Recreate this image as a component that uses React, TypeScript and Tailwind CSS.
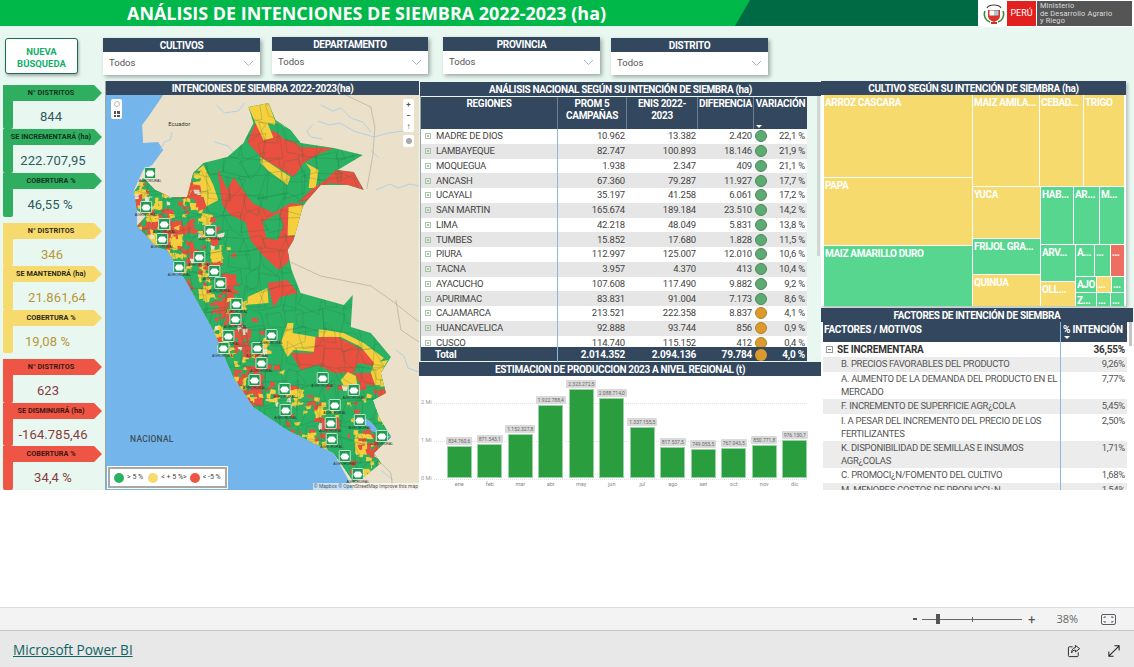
import React from "react";

type P = [number, number];
const pts = (a: P[]) => a.map((p) => p.join(",")).join(" ");

const G = "#2bb163";
const Y = "#f5cf3c";
const R = "#e9503f";

const coast: P[] = [
  [143, 178], [134, 192], [137, 210], [137, 226], [157, 247], [167, 250], [187, 283], [213, 330],
  [233, 377], [253, 407], [287, 430], [333, 453], [353, 480], [353, 490],
];
const peru: P[] = [
  [143, 178], [155, 190], [170, 197], [187, 197], [193, 173], [203, 163], [227, 157], [243, 143], [253, 123],
  [248, 107], [268, 103], [275, 120], [290, 130], [300, 143], [333, 148], [362, 155], [337, 170], [353, 172],
  [363, 190], [347, 185], [320, 185], [307, 200], [302, 207], [293, 240], [287, 250], [291, 270], [300, 293],
  [343, 305], [352, 295], [350, 327], [370, 333], [390, 357], [380, 373], [385, 393], [372, 400], [378, 417],
  [390, 437], [373, 453], [380, 463], [363, 477], [353, 482], [333, 453], [287, 430], [253, 407], [233, 377],
  [213, 330], [187, 283], [167, 250], [157, 247], [137, 226], [146, 216], [137, 210], [134, 192],
];
const big: [string, P[]][] = [
  [R, [[255, 123], [267, 130], [283, 133], [300, 147], [333, 148], [320, 153], [303, 163], [293, 177], [260, 157], [247, 142]]],
  [Y, [[248, 107], [268, 103], [275, 122], [287, 128], [267, 123], [273, 138], [263, 140], [255, 123]]],
  [G, [[275, 122], [290, 130], [300, 143], [285, 140], [273, 130]]],
  [Y, [[260, 157], [290, 177], [287, 185], [267, 170], [260, 163]]],
  [Y, [[305, 163], [318, 170], [315, 188], [308, 188], [310, 170]]],
  [R, [[335, 170], [353, 172], [363, 190], [347, 185], [328, 183], [307, 200], [297, 203], [310, 190], [325, 180]]],
  [R, [[217, 168], [227, 190], [233, 177], [252, 203], [273, 213], [290, 203], [305, 205], [297, 225], [290, 250], [288, 262], [278, 270], [262, 255], [250, 240], [245, 222], [230, 215], [222, 205]]],
  [G, [[262, 222], [278, 213], [283, 225], [277, 240], [266, 238]]],
  [Y, [[288, 207], [304, 205], [295, 235], [287, 236]]],
  [Y, [[203, 165], [213, 185], [218, 200], [205, 207], [203, 197], [187, 197], [192, 175]]],
  [R, [[187, 197], [203, 197], [207, 210], [195, 220], [187, 210]]],
  [G, [[240, 262], [256, 268], [258, 285], [247, 292], [240, 280]]],
  [Y, [[247, 297], [267, 288], [268, 303], [243, 305]]],
  [R, [[267, 283], [287, 280], [297, 293], [280, 297], [273, 307]]],
  [Y, [[287, 323], [293, 323], [292, 333], [315, 337], [315, 352], [293, 350], [287, 357], [280, 343]]],
  [R, [[315, 337], [337, 337], [357, 347], [373, 357], [377, 367], [357, 363], [353, 373], [333, 373], [317, 365], [300, 370], [290, 353], [313, 353]]],
  [Y, [[318, 329], [343, 333], [363, 343], [383, 358], [375, 365], [360, 347], [340, 337], [318, 337]]],
  [Y, [[373, 363], [387, 360], [380, 373], [385, 393], [373, 390], [370, 373]]],
  [R, [[353, 373], [370, 373], [377, 393], [365, 393]]],
  [Y, [[347, 372], [355, 376], [357, 388], [345, 390], [340, 380]]],
];
const markers: P[] = [
  [150, 173], [146, 207], [164, 224], [210, 231], [162, 239], [179, 267], [199, 257], [214, 271], [220, 283],
  [236, 304], [235, 319], [228, 336], [223, 348], [257, 348], [271, 335], [261, 363], [254, 380], [284, 389],
  [322, 378], [353, 390], [334, 405], [285, 410], [359, 420], [330, 423], [331, 439], [381, 436], [344, 456], [357, 474],
];

function segDist(p: P, a: P, b: P) {
  const dx = b[0] - a[0], dy = b[1] - a[1];
  const t = Math.max(0, Math.min(1, ((p[0] - a[0]) * dx + (p[1] - a[1]) * dy) / (dx * dx + dy * dy)));
  return Math.hypot(p[0] - a[0] - t * dx, p[1] - a[1] - t * dy);
}
function coastDist(p: P) {
  let d = 1e9;
  for (let i = 0; i < coast.length - 1; i++) d = Math.min(d, segDist(p, coast[i], coast[i + 1]));
  return d;
}
function buildCells() {
  let s = 12345;
  const rnd = () => {
    s = (s * 16807) % 2147483647;
    return s / 2147483647;
  };
  const pick = (y: number) => {
    const k = rnd();
    const g = y > 390 ? 0.66 : 0.5;
    return k < g ? G : k < g + (y > 390 ? 0.12 : 0.32) ? R : Y;
  };
  const blocks = new Map<string, string>();
  const fine: { p: string; c: string }[] = [];
  const step = 4;
  for (let y = 170; y < 490; y += step) {
    for (let x = 130; x < 395; x += step) {
      const south = y > 385 && x > 325;
      const d = coastDist([x, y]);
      if (d > 42 + (y < 260 ? 12 : 0) && !south) continue;
      const key = `${Math.floor(x / 13)}:${Math.floor(y / 13)}`;
      if (!blocks.has(key)) blocks.set(key, pick(y));
      const j = () => (rnd() - 0.5) * 3;
      const c = rnd() < 0.6 ? (blocks.get(key) as string) : rnd() < 0.06 ? "#ece2cc" : pick(y);
      const w = step + 0.5 + rnd() * 2;
      fine.push({
        p: pts([[x + j(), y + j()], [x + w + j(), y + j()], [x + w + j(), y + w + j()], [x + j(), y + w + j()]]),
        c,
      });
    }
  }
  const lines: string[] = [];
  const st = 19;
  for (let y = 100; y < 490; y += st) {
    for (let x = 130; x < 395; x += st) {
      const j = () => (rnd() - 0.5) * 12;
      lines.push(pts([[x + j(), y + j()], [x + st + j(), y + j()], [x + st + j(), y + st + j()], [x + j(), y + st + j()]]));
    }
  }
  return { fine, lines };
}
const cells = buildCells();

function PeruMap() {
  return (
    <svg viewBox="106 95 312 395" className="block h-full w-full" preserveAspectRatio="none">
      <defs>
        <clipPath id="peru-clip">
          <polygon points={pts(peru)} />
        </clipPath>
      </defs>
      <rect x="106" y="95" width="312" height="395" fill="#74b6ec" />
      <polygon
        points={pts([
          [163, 95], [148, 117], [142, 125], [143, 143], [158, 142], [163, 150], [152, 165], [143, 170], [134, 190],
          [137, 210], [137, 226], [157, 247], [167, 250], [187, 283], [213, 330], [233, 377], [253, 407], [287, 430],
          [333, 453], [353, 490], [418, 490], [418, 95],
        ])}
        fill="#ebe0c9"
      />
      <g fill="none" stroke="#a3cdec" strokeWidth="0.8">
        <path d="M320 105l12 6 8-3 10 10 12 4 8 10M317 121l12 4 10-2 14 8 20 6 15-4 22-3M312 125l-6 6 4 6 12 2" />
        <path d="M216 105l8 8 14-2 6-8M214 142l14 4 6 8M160 150l4-8 6-2 2-8M375 190l14-6 8 4 12-4 9 2M370 150l8 8" />
        <path d="M395 350l8 6 4 12 11 4M380 470l12 10" />
      </g>
      <g fill="none" stroke="#9d9a90" strokeWidth="0.5">
        <path d="M345 95l25 12 4 20-2 28-6 34M290 262l30 14 50 10 20 14 28 22M395 300l5 30 18 12M380 463l10 10 2 17" />
      </g>
      <polygon points={pts(peru)} fill={G} />
      <g clipPath="url(#peru-clip)">
        {big.map(([c, p], i) => (
          <polygon key={i} points={pts(p)} fill={c} />
        ))}
        {cells.fine.map((c, i) => (
          <polygon key={i} points={c.p} fill={c.c} />
        ))}
        {cells.lines.map((l, i) => (
          <polygon key={i} points={l} fill="none" stroke="#1f6f45" strokeOpacity="0.55" strokeWidth="0.4" />
        ))}
      </g>
      <path d="M360 417l8 3 6 6 5 8-8-3-7-6z" fill="#74b6ec" />
      <path d="M379 430l6 8 5-2" fill="none" stroke="#74b6ec" strokeWidth="1.5" />
      {markers.map(([x, y], i) => (
        <g key={i}>
          <rect x={x - 5.5} y={y - 5.5} width="11" height="11" rx="0.8" fill="#1e9a52" stroke="#fff" strokeWidth="0.7" />
          <path d={`M${x - 4.5} ${y + 0.5}l2.2-3h4.600l2.200 3-1.800 3h-5.400z`} fill="#fff" />
          <text x={x} y={y + 9} textAnchor="middle" fontSize="3.6" fill="#333" fontFamily="Liberation Sans, sans-serif">
            AGRORURAL
          </text>
        </g>
      ))}
      <text x="179" y="126.5" textAnchor="middle" fontSize="6" fill="#333" fontFamily="Roboto, sans-serif">
        Ecuador
      </text>
      <text x="130" y="442" fontSize="8.5" fontWeight="500" fill="#40505a" fontFamily="Roboto, sans-serif" letterSpacing="0.2">
        NACIONAL
      </text>
    </svg>
  );
}

function PanelTitle({ children, className }: { children: React.ReactNode; className: string }) {
  return (
    <div className={`flex h-[14px] items-center justify-center bg-[#33475e] text-[10px] font-bold tracking-[-0.35px] whitespace-nowrap text-white ${className}`}>
      {children}
    </div>
  );
}

function Filter({ title, className }: { title: string; className: string }) {
  return (
    <div className={`flex flex-col shadow-[2px_2px_4px_rgba(60,70,70,0.45)] ${className}`}>
      <div className="flex h-[14px] items-center justify-center bg-[#33475e] text-[10px] font-bold tracking-[-0.3px] text-white">{title}</div>
      <div className="flex h-[23px] items-center justify-between bg-white px-[6px] text-[9.5px] text-[#555]">
        <span>Todos</span>
        <svg width="11" height="7" viewBox="0 0 11 7" fill="none" stroke="#8fb4d6" strokeWidth="0.9">
          <path d="M1 1l4.5 4.5L10 1" />
        </svg>
      </div>
    </div>
  );
}

type Kpi = { t: string; v: string; h: string; o: string };

function KpiCard({ k, bg, text, value }: { k: Kpi; bg: string; text: string; value: string }) {
  return (
    <div className={`flex flex-col ${k.h}`}>
      <div className={`flex h-[16px] w-[99px] items-center justify-center pr-[3px] text-[7.3px] font-bold whitespace-nowrap [clip-path:polygon(0_0,92%_0,100%_50%,92%_100%,0_100%)] ${bg} ${text}`}>
        {k.t}
      </div>
      <div className="flex min-h-0 flex-1">
        <div className={`w-[10px] rounded-b-[2px] ${bg}`} />
        <div className={`flex w-[80px] items-center justify-center pt-[4px] text-[13px] tracking-[0.1px] whitespace-nowrap ${value} ${k.o}`}>{k.v}</div>
      </div>
    </div>
  );
}

const greens: Kpi[] = [
  { t: "N° DISTRITOS", v: "844", h: "h-[44px]", o: "pr-[4px]" },
  { t: "SE INCREMENTARÁ (ha)", v: "222.707,95", h: "h-[44px]", o: "" },
  { t: "COBERTURA %", v: "46,55 %", h: "h-[44px]", o: "pr-[6px]" },
];
const yellows: Kpi[] = [
  { t: "N° DISTRITOS", v: "346", h: "h-[43px]", o: "pr-[2px]" },
  { t: "SE MANTENDRÁ (ha)", v: "21.861,64", h: "h-[44px]", o: "pl-[8px]" },
  { t: "COBERTURA %", v: "19,08 %", h: "h-[43px]", o: "pr-[11px]" },
];
const reds: Kpi[] = [
  { t: "N° DISTRITOS", v: "623", h: "h-[44px]", o: "pr-[10px]" },
  { t: "SE DISMINUIRÁ (ha)", v: "-164.785,46", h: "h-[43px]", o: "" },
  { t: "COBERTURA %", v: "34,4 %", h: "h-[44px]", o: "" },
];

const rows: [string, string, string, string, string, boolean][] = [
  ["MADRE DE DIOS", "10.962", "13.382", "2.420", "22,1 %", true],
  ["LAMBAYEQUE", "82.747", "100.893", "18.146", "21,9 %", true],
  ["MOQUEGUA", "1.938", "2.347", "409", "21,1 %", true],
  ["ANCASH", "67.360", "79.287", "11.927", "17,7 %", true],
  ["UCAYALI", "35.197", "41.258", "6.061", "17,2 %", true],
  ["SAN MARTIN", "165.674", "189.184", "23.510", "14,2 %", true],
  ["LIMA", "42.218", "48.049", "5.831", "13,8 %", true],
  ["TUMBES", "15.852", "17.680", "1.828", "11,5 %", true],
  ["PIURA", "112.997", "125.007", "12.010", "10,6 %", true],
  ["TACNA", "3.957", "4.370", "413", "10,4 %", true],
  ["AYACUCHO", "107.608", "117.490", "9.882", "9,2 %", true],
  ["APURIMAC", "83.831", "91.004", "7.173", "8,6 %", true],
  ["CAJAMARCA", "213.521", "222.358", "8.837", "4,1 %", false],
  ["HUANCAVELICA", "92.888", "93.744", "856", "0,9 %", false],
  ["CUSCO", "114.740", "115.152", "412", "0,4 %", false],
];

const bars: [string, string, number][] = [
  ["ene", "834.760,6", 32], ["feb", "871.543,1", 34], ["mar", "1.152.327,8", 44], ["abr", "1.922.788,4", 73],
  ["may", "2.323.272,5", 89], ["jun", "2.088.714,0", 80], ["jul", "1.337.155,5", 51], ["ago", "817.537,5", 31],
  ["set", "749.055,5", 29], ["oct", "767.043,5", 30], ["nov", "850.771,8", 33], ["dic", "976.130,7", 38],
];

const factors: { t: React.ReactNode; v: string; h: string; bg: string }[] = [
  { t: "B. PRECIOS FAVORABLES DEL PRODUCTO", v: "9,26%", h: "h-[15px]", bg: "bg-[#ececec]" },
  { t: "A. AUMENTO DE LA DEMANDA DEL PRODUCTO EN EL MERCADO", v: "7,77%", h: "h-[27px]", bg: "bg-white" },
  { t: "F. INCREMENTO DE SUPERFICIE AGR¿COLA", v: "5,45%", h: "h-[15px]", bg: "bg-[#ececec]" },
  { t: "I. A PESAR DEL INCREMENTO DEL PRECIO DE LOS FERTILIZANTES", v: "2,50%", h: "h-[27px]", bg: "bg-white" },
  { t: "K. DISPONIBILIDAD DE SEMILLAS E INSUMOS AGR¿COLAS", v: "1,71%", h: "h-[27px]", bg: "bg-[#ececec]" },
  { t: "C. PROMOCI¿N/FOMENTO DEL CULTIVO", v: "1,68%", h: "h-[15px]", bg: "bg-white" },
  { t: "M. MENORES COSTOS DE PRODUCCI¿N", v: "1,54%", h: "h-[15px]", bg: "bg-[#ececec]" },
];

function Cell({ t, className }: { t?: string; className: string }) {
  return <div className={`overflow-hidden pt-[2px] pl-[1px] text-[10px] leading-[12px] font-bold tracking-[-0.35px] whitespace-nowrap text-white ${className}`}>{t}</div>;
}
const YC = "bg-[#f6da6e]";
const GC = "bg-[#56d68f]";

function Treemap() {
  return (
    <div className="flex h-[211px] gap-[1px] bg-white pl-[3px]">
      <div className="flex w-[148px] flex-col gap-[1px]">
        <Cell t="ARROZ CASCARA" className={`h-[82px] ${YC}`} />
        <Cell t="PAPA" className={`h-[67px] ${YC}`} />
        <Cell t="MAIZ AMARILLO DURO" className={`h-[60px] ${GC}`} />
      </div>
      <div className="flex w-[151px] flex-col gap-[1px]">
        <div className="flex h-[91px] gap-[1px]">
          <Cell t="MAIZ AMILA..." className={`w-[66px] ${YC}`} />
          <Cell t="CEBAD..." className={`w-[43px] ${YC}`} />
          <Cell t="TRIGO" className={`w-[40px] ${YC}`} />
        </div>
        <div className="flex h-[119px] gap-[1px]">
          <div className="flex w-[67px] flex-col gap-[1px]">
            <Cell t="YUCA" className={`h-[51px] ${YC}`} />
            <Cell t="FRIJOL GRA..." className={`h-[35px] ${GC}`} />
            <Cell t="QUINUA" className={`h-[31px] ${YC}`} />
          </div>
          <div className="flex w-[83px] flex-col gap-[1px]">
            <div className="flex h-[57px] gap-[1px]">
              <Cell t="HAB..." className={`w-[32px] ${GC}`} />
              <Cell t="AR..." className={`w-[25px] ${GC}`} />
              <Cell t="M..." className={`w-[24px] ${GC}`} />
            </div>
            <div className="flex h-[61px] gap-[1px]">
              <div className="flex w-[34px] flex-col gap-[1px]">
                <Cell t="ARV..." className={`h-[36px] ${GC}`} />
                <Cell t="OLL..." className={`h-[24px] ${YC}`} />
              </div>
              <div className="flex w-[48px] flex-col gap-[1px]">
                <div className="flex h-[31px] gap-[1px]">
                  <Cell t="A..." className={`w-[18px] ${GC}`} />
                  <Cell t="..." className={`w-[15px] ${GC}`} />
                  <Cell t="..." className="w-[13px] bg-[#ee6e62]" />
                </div>
                <div className="flex h-[15px] gap-[1px]">
                  <Cell t="AJO" className={`w-[20px] ${GC}`} />
                  <Cell t="..." className={`w-[14px] ${YC}`} />
                  <Cell t="..." className={`w-[12px] ${GC}`} />
                </div>
                <div className="flex h-[13px] gap-[1px]">
                  <Cell t="Z..." className={`w-[20px] ${GC}`} />
                  <Cell t="..." className={`w-[13px] ${GC}`} />
                  <Cell t="..." className={`w-[13px] ${GC}`} />
                </div>
              </div>
            </div>
          </div>
        </div>
      </div>
    </div>
  );
}

function PlusBox() {
  return (
    <span className="mr-[5px] flex h-[6px] w-[6px] shrink-0 items-center justify-center border border-[#a5c4a5]">
      <span className="block h-[2px] w-[2px] bg-[#a5c4a5]" />
    </span>
  );
}

function RegionTable() {
  const grid = "grid grid-cols-[137px_69px_71px_56px_53px]";
  return (
    <div className="mt-[1px] flex w-[386px] flex-col">
      <div className={`${grid} h-[32px] bg-[#33475e] text-center text-[10px] leading-[12px] font-bold tracking-[-0.3px] text-white`}>
        <div className="border-r border-[#6d7f92] pt-[1px]">REGIONES</div>
        <div className="border-r border-[#6d7f92] pt-[1px]">PROM 5<br />CAMPAÑAS</div>
        <div className="border-r border-[#6d7f92] pt-[1px]">ENIS 2022-<br />2023</div>
        <div className="border-r border-[#6d7f92] pt-[1px]">DIFERENCIA</div>
        <div className="flex flex-col justify-between pt-[1px]">
          <span>VARIACIÓN</span>
          <span className="mb-[1px] ml-[2px] h-0 w-0 border-x-[3px] border-t-[3px] border-x-transparent border-t-white" />
        </div>
      </div>
      <div className="h-[218px] overflow-hidden">
        {rows.map((r, i) => (
          <div key={r[0]} className={`${grid} h-[14.75px] items-center text-[9.5px] tracking-[-0.2px] text-[#444] ${i % 2 ? "bg-[#e6e6e6]" : "bg-white"}`}>
            <div className="flex h-full items-center border-r border-[#8ab8e0] pl-[4px] whitespace-nowrap">
              <PlusBox />
              {r[0]}
            </div>
            <div className="pr-[2px] text-right">{r[1]}</div>
            <div className="pr-[2px] text-right">{r[2]}</div>
            <div className="pr-[2px] text-right">{r[3]}</div>
            <div className="flex items-center justify-between pr-[2px]">
              <span className={`ml-[1px] h-[12px] w-[12px] rounded-full border ${r[5] ? "border-[#4b8a5c] bg-[#5daa72]" : "border-[#b57f24] bg-[#dc9a2e]"}`} />
              <span>{r[4]}</span>
            </div>
          </div>
        ))}
      </div>
      <div className={`${grid} h-[14px] items-center bg-[#33475e] text-[10px] font-bold tracking-[-0.2px] text-white`}>
        <div className="border-r border-[#8ab8e0] pl-[14px]">Total</div>
        <div className="pr-[2px] text-right">2.014.352</div>
        <div className="pr-[2px] text-right">2.094.136</div>
        <div className="pr-[2px] text-right">79.784</div>
        <div className="flex items-center justify-between pr-[2px]">
          <span className="ml-[1px] h-[12px] w-[12px] rounded-full bg-[#dc9a2e]" />
          <span>4,0 %</span>
        </div>
      </div>
    </div>
  );
}

function Chart() {
  return (
    <div className="relative h-[114px] bg-white">
      {[
        ["top-[26px]", "2 Mi"],
        ["top-[64px]", "1 Mi"],
        ["top-[102px]", "0 Mi"],
      ].map(([c, t]) => (
        <div key={t} className={`absolute right-[14px] left-[2px] flex items-center gap-[2px] ${c}`}>
          <span className="-mt-[3px] h-[6px] text-[5.5px] leading-[6px] text-[#999]">{t}</span>
          <span className="flex-1 border-t border-dotted border-[#e2e2e2]" />
        </div>
      ))}
      <div className="relative ml-[25px] grid h-[114px] w-[366px] grid-cols-12">
        {bars.map(([m, l, h]) => (
          <div key={m} className="flex flex-col items-center justify-end">
            <span className="mb-[1px] rounded-[1px] bg-[#dadada] px-[2px] text-[5px] leading-[8px] whitespace-nowrap text-[#666]">{l}</span>
            <div className="w-[25px] border border-[#9ad2a6] bg-[#2a9d3f]" style={{ height: h }} />
            <span className="h-[12px] text-[5.5px] leading-[12px] text-[#888]">{m}</span>
          </div>
        ))}
      </div>
    </div>
  );
}

function Factors() {
  const grid = "grid grid-cols-[238px_66px]";
  return (
    <div className="flex">
      <div className="ml-[2px] flex w-[304px] flex-col">
        <div className={`${grid} h-[20px] bg-[#33475e] text-[10px] font-bold tracking-[-0.2px] text-white`}>
          <div className="flex items-start border-r border-[#8ab8e0] pt-[2px] pl-[1px] leading-[12px]">FACTORES / MOTIVOS</div>
          <div className="flex flex-col pt-[2px] pl-[2px] leading-[12px]">
            <span>% INTENCIÓN</span>
            <span className="ml-[1px] h-0 w-0 border-x-[3px] border-t-[3px] border-x-transparent border-t-white" />
          </div>
        </div>
        <div className="h-[148px] overflow-hidden">
          <div className={`${grid} h-[15px] bg-white text-[10px] font-bold tracking-[-0.2px] text-[#333]`}>
            <div className="flex items-center border-r border-[#8ab8e0] pl-[3px]">
              <span className="mr-[4px] flex h-[7px] w-[7px] items-center justify-center border border-[#999]">
                <span className="block h-[1px] w-[3px] bg-[#777]" />
              </span>
              SE INCREMENTARA
            </div>
            <div className="flex items-center justify-end pr-[2px]">36,55%</div>
          </div>
          {factors.map((f) => (
            <div key={f.v} className={`${grid} text-[9.5px] leading-[12.5px] tracking-[-0.3px] text-[#555] ${f.h} ${f.bg}`}>
              <div className="border-r border-[#8ab8e0] pt-[1px] pl-[18px]">{f.t}</div>
              <div className="pt-[1px] pr-[2px] text-right">{f.v}</div>
            </div>
          ))}
        </div>
      </div>
      <div className="ml-[2px] h-[24px] w-[3px] bg-[#c4c4c4]" />
    </div>
  );
}

function Shield() {
  return (
    <svg width="22" height="24" viewBox="0 0 22 24">
      <path d="M4 6c2-4 12-4 14 0" fill="none" stroke="#444" strokeWidth="1.2" />
      <path d="M2 9c-2 5 1 10 5 11M20 9c2 5-1 10-5 11" fill="none" stroke="#3a8a3a" strokeWidth="1.6" />
      <path d="M5 8h12v6c0 3-3 5-6 6-3-1-6-3-6-6z" fill="#d8342c" />
      <rect x="6.5" y="8.5" width="4.5" height="5" fill="#fff" />
      <rect x="11" y="8.5" width="4.5" height="5" fill="#9ccfe0" />
      <rect x="8" y="20" width="6" height="2" fill="#c9362c" />
    </svg>
  );
}

export default function App() {
  return (
    <div className="flex h-[667px] w-[1134px] flex-col overflow-hidden bg-white font-['Roboto',sans-serif]">
      <div className="flex h-[490px] flex-col overflow-hidden bg-[#e8f8f0]">
        <header className="flex h-[26px] shrink-0 bg-[#00b74a]">
          <div className="w-[735px] pl-[127px] font-['Open_Sans',sans-serif] text-[17.95px] leading-[26px] font-bold whitespace-nowrap text-white">
            ANÁLISIS DE INTENCIONES DE SIEMBRA 2022-2023 (ha)
          </div>
          <div className="w-[243px] bg-[#006a44] [clip-path:polygon(15px_0,100%_0,100%_100%,0_100%)]" />
          <div className="flex h-[27px] w-[156px] items-center bg-white pl-[5px]">
            <Shield />
            <div className="ml-[2px] flex h-[25px] w-[29px] items-center justify-center bg-[#e1201f] text-[9px] text-white">PERÚ</div>
            <div className="ml-[1px] flex h-[25px] w-[95px] items-center bg-[#555] pl-[3px] text-[7.4px] leading-[7.4px] tracking-[0.15px] text-[#ddd]">
              <span>Ministerio<br />de Desarrollo Agrario<br />y Riego</span>
            </div>
          </div>
        </header>

        <div className="flex min-h-0 flex-1">
          {/* left rail */}
          <div className="flex w-[103px] shrink-0 flex-col">
            <button className="mt-[12px] ml-[5px] flex h-[36px] w-[73px] items-center justify-center rounded-[3px] border border-[#1c6b55] bg-white pt-[3px] text-[9.5px] leading-[12px] font-bold text-[#12b06a] shadow-[1px_2px_3px_rgba(60,70,70,0.4)]">
              NUEVA<br />BÚSQUEDA
            </button>
            <div className="mt-[11px] ml-[3px] flex flex-col gap-[6px]">
              <div className="flex flex-col">
                {greens.map((k) => (
                  <KpiCard key={k.t} k={k} bg="bg-[#2fae60]" text="text-[#12331f]" value="text-[#2f5a62]" />
                ))}
              </div>
              <div className="flex flex-col">
                {yellows.map((k) => (
                  <KpiCard key={k.t} k={k} bg="bg-[#f6da6e]" text="text-[#2e2a10]" value="text-[#b8963a]" />
                ))}
              </div>
              <div className="flex flex-col">
                {reds.map((k) => (
                  <KpiCard key={k.t} k={k} bg="bg-[#ef5544]" text="text-[#3c1512]" value="text-[#8a3a3e]" />
                ))}
              </div>
            </div>
          </div>

          {/* centre */}
          <div className="flex w-[718px] shrink-0 flex-col">
            <div className="flex h-[55px] shrink-0">
              <Filter title="CULTIVOS" className="mt-[12px] h-[37px] w-[157px]" />
              <Filter title="DEPARTAMENTO" className="mt-[11px] ml-[12px] h-[37px] w-[156px]" />
              <Filter title="PROVINCIA" className="mt-[11px] ml-[15px] h-[37px] w-[157px]" />
              <Filter title="DISTRITO" className="mt-[12px] ml-[11px] h-[37px] w-[157px]" />
            </div>
            <div className="flex min-h-0 flex-1">
              <div className="ml-[2px] flex w-[314px] shrink-0 flex-col border-l border-[#9aa5a0]">
                <PanelTitle className="w-full">INTENCIONES DE SIEMBRA 2022-2023(ha)</PanelTitle>
                <div className="relative min-h-0 flex-1">
                  <PeruMap />
                  <div className="absolute top-[4px] left-[5px] flex w-[11px] flex-col items-center gap-[4px] rounded-[2px] bg-white py-[2px]">
                    <span className="h-[6px] w-[6px] rounded-full border border-[#bbb]" />
                    <span className="grid h-[6px] w-[6px] grid-cols-2 gap-[1px]">
                      <i className="bg-[#555]" /><i className="bg-[#555]" /><i className="bg-[#555]" /><i className="bg-[#555]" />
                    </span>
                  </div>
                  <div className="absolute top-[4px] right-[5px] flex w-[11px] flex-col items-center rounded-[2px] bg-white text-[8px] leading-[11px] font-bold text-[#555]">
                    <span>+</span>
                    <span>−</span>
                    <span>↑</span>
                  </div>
                  <div className="absolute top-[40px] right-[5px] flex h-[12px] w-[11px] items-center justify-center rounded-[2px] bg-white">
                    <span className="h-[6px] w-[6px] rounded-full bg-[#aaa]" />
                  </div>
                  <div className="absolute right-0 bottom-0 bg-white/60 px-[1px] text-[5px] leading-[7px] text-[#555]">© Mapbox © OpenStreetMap Improve this map</div>
                  <div className="absolute bottom-[2px] left-[2px] flex h-[21px] w-[119px] items-center gap-[3px] border-2 border-[#a8a8a8] bg-white pl-[4px] text-[7px] whitespace-nowrap text-[#444] outline outline-1 outline-white">
                    <span className="h-[10px] w-[10px] rounded-full bg-[#2bb163]" />
                    <span>&gt; 5 %</span>
                    <span className="ml-[2px] h-[10px] w-[10px] rounded-full bg-[#f6da6e]" />
                    <span>&lt; + 5 %&gt;</span>
                    <span className="h-[10px] w-[10px] rounded-full bg-[#ef5544]" />
                    <span>&lt; -5 %</span>
                  </div>
                </div>
              </div>
              <div className="flex w-[402px] shrink-0 flex-col">
                <div className="h-[1px]" />
                <PanelTitle className="ml-[1px] w-[401px]">ANÁLISIS NACIONAL SEGÚN SU INTENCIÓN DE SIEMBRA (ha)</PanelTitle>
                <div className="flex h-[265px]">
                  <div className="ml-[1px] w-[1px] bg-[#9aa5a0]" />
                  <RegionTable />
                  <div className="ml-[10px] h-[160px] w-[3px] bg-[#d2d6d3]" />
                </div>
                <div className="h-[1px]" />
                <PanelTitle className="w-full">ESTIMACION DE PRODUCCION 2023 A NIVEL REGIONAL (t)</PanelTitle>
                <Chart />
              </div>
            </div>
          </div>

          {/* right */}
          <div className="flex flex-1 flex-col pt-[55px]">
            <div className="w-[305px] shadow-[2px_2px_3px_rgba(60,70,70,0.3)]">
              <PanelTitle className="w-full">CULTIVO SEGÚN SU INTENCIÓN DE SIEMBRA (ha)</PanelTitle>
              <Treemap />
            </div>
            <div className="h-[2px]" />
            <PanelTitle className="w-[312px]">FACTORES DE INTENCIÓN DE SIEMBRA</PanelTitle>
            <div className="bg-white">
              <Factors />
            </div>
          </div>
        </div>
      </div>

      <div className="h-[117px] shrink-0 bg-white" />

      <div className="flex h-[24px] shrink-0 items-center border-t border-b border-t-[#dcdcdc] border-b-[#c8c8c8] bg-[#f3f3f3] text-[#555]">
        <span className="ml-[913px] h-[2px] w-[4px] bg-[#555]" />
        <div className="relative ml-[5px] flex h-[10px] w-[100px] items-center">
          <span className="h-[1px] w-full bg-[#666]" />
          <span className="absolute left-[14px] h-[10px] w-[4px] bg-[#555]" />
          <span className="absolute left-[50px] h-[5px] w-[1px] bg-[#666]" />
        </div>
        <span className="ml-[6px] text-[13px] leading-none">+</span>
        <span className="ml-[21px] w-[24px] font-['Open_Sans',sans-serif] text-[11px] text-[#666]">38%</span>
        <svg className="ml-[21px]" width="15" height="11" viewBox="0 0 15 11" fill="none" stroke="#5b5b66" strokeWidth="1">
          <rect x="0.5" y="0.5" width="14" height="10" rx="1.5" />
          <path d="M3 4V3h2M10 3h2v1M12 7v1h-2M5 8H3V7" />
        </svg>
      </div>

      <footer className="flex min-h-0 flex-1 items-center bg-[#e8e8e8] pt-[3px]">
        <a className="ml-[13px] font-['Open_Sans',sans-serif] text-[13.6px] text-[#0f6464] underline">Microsoft Power BI</a>
        <div className="mr-[14px] ml-auto flex items-center gap-[27px]">
          <svg width="14" height="14" viewBox="0 0 15 15" fill="none" stroke="#222" strokeWidth="1">
            <path d="M6 3H2.5A1 1 0 001.500 4v8.500a1 1 0 001 1H11a1 1 0 001-1V9" />
            <path d="M9 1.500l4.500 3.500L9 8.500V6.500c-2 0-3.500 1-4 3 0-3.500 1.500-5.500 4-5.500z" />
          </svg>
          <svg width="12" height="12" viewBox="0 0 14 14" fill="none" stroke="#222" strokeWidth="1.2">
            <path d="M1.500 12.500l11-11M7.500 1h5.500v5.500M1 7.500V13h5.500" />
          </svg>
        </div>
      </footer>
    </div>
  );
}
